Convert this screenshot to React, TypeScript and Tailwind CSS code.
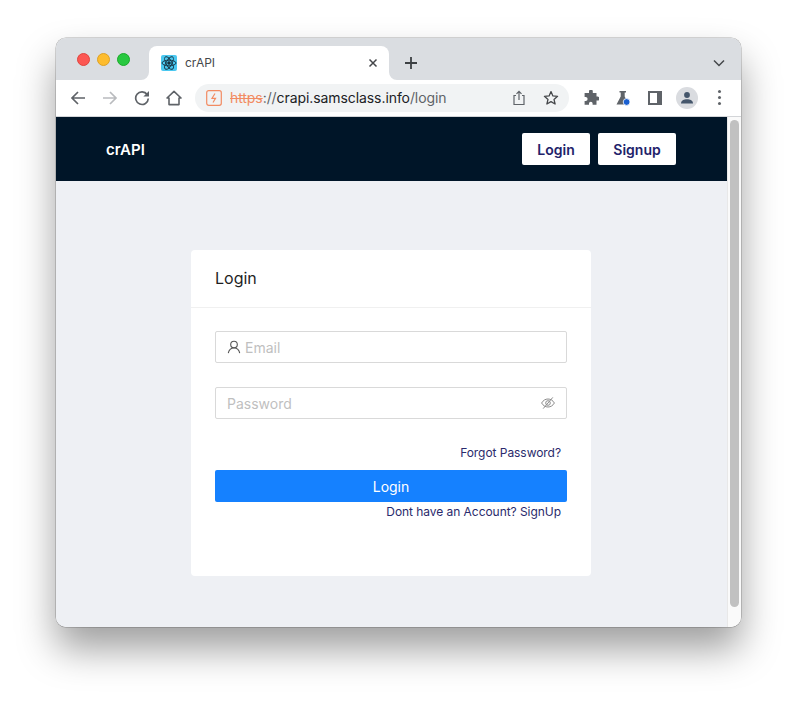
import React from "react";

const Dark = "#5f6368";

function Lights() {
  return (
    <div className="flex gap-[7px] ml-[21px] mr-[19px] mt-[15px] self-start">
      <div className="w-[13px] h-[13px] rounded-full bg-[#fc5753] border border-[#e0443e]" />
      <div className="w-[13px] h-[13px] rounded-full bg-[#fdbc2e] border border-[#dea123]" />
      <div className="w-[13px] h-[13px] rounded-full bg-[#28c840] border border-[#1aab29]" />
    </div>
  );
}

function ReactFavicon() {
  return (
    <div className="w-4 h-4 bg-[#4bc8f0] rounded-[2px] flex items-center justify-center shrink-0">
      <svg width="16" height="16" viewBox="0 0 16 16" fill="none" stroke="#16303f" strokeWidth="0.9">
        <ellipse cx="8" cy="8" rx="7" ry="2.8" />
        <ellipse cx="8" cy="8" rx="7" ry="2.8" transform="rotate(60 8 8)" />
        <ellipse cx="8" cy="8" rx="7" ry="2.8" transform="rotate(120 8 8)" />
        <circle cx="8" cy="8" r="1.3" fill="#16303f" />
      </svg>
    </div>
  );
}

function Tab() {
  return (
    <div className="relative w-[240px] h-[34px] mt-2 bg-white rounded-t-[8px] flex items-center pl-3 pr-[11px]">
      <svg className="absolute left-[-8px] bottom-0" width="8" height="8" viewBox="0 0 8 8">
        <path d="M8 0 V8 H0 A8 8 0 0 0 8 0 Z" fill="#fff" />
      </svg>
      <svg className="absolute right-[-8px] bottom-0" width="8" height="8" viewBox="0 0 8 8">
        <path d="M0 0 V8 H8 A8 8 0 0 1 0 0 Z" fill="#fff" />
      </svg>
      <ReactFavicon />
      <span className="ml-2 text-[12px] text-[#45474a] font-['Inter',sans-serif]">crAPI</span>
      <svg className="ml-auto" width="10" height="10" viewBox="0 0 10 10" stroke="#45474a" strokeWidth="1.5">
        <path d="M1.5 1.5 L8.5 8.5 M8.5 1.5 L1.5 8.5" />
      </svg>
    </div>
  );
}

function TabStrip() {
  return (
    <div className="h-[42px] bg-[#dadde1] flex items-start shrink-0">
      <Lights />
      <Tab />
      <svg className="ml-[15px] mt-[18px]" width="14" height="14" viewBox="0 0 14 14" stroke="#3c4043" strokeWidth="1.8">
        <path d="M7 1 V13 M1 7 H13" />
      </svg>
      <svg className="ml-auto mr-[16px] mt-[21px]" width="12" height="8" viewBox="0 0 12 8" fill="none" stroke="#45474a" strokeWidth="1.5">
        <path d="M1 1.5 L6 6.5 L11 1.5" />
      </svg>
    </div>
  );
}

function NavIcons() {
  return (
    <div className="flex items-center ml-2 gap-[4px]">
      <div className="w-7 h-7 flex items-center justify-center">
        <svg width="16" height="16" viewBox="0 0 16 16" fill="none" stroke={Dark} strokeWidth="1.7">
          <path d="M15 8 H2 M8 2 L2 8 L8 14" />
        </svg>
      </div>
      <div className="w-7 h-7 flex items-center justify-center">
        <svg width="16" height="16" viewBox="0 0 16 16" fill="none" stroke="#b9bbbe" strokeWidth="1.7">
          <path d="M1 8 H14 M8 2 L14 8 L8 14" />
        </svg>
      </div>
      <div className="w-7 h-7 flex items-center justify-center">
        <svg width="16" height="16" viewBox="0 0 16 16" fill="none" stroke={Dark} strokeWidth="1.7">
          <path d="M13.2 4.6 A6.3 6.3 0 1 0 14.3 8.5" />
          <path d="M15 1 V6.6 H9.4 Z" fill={Dark} stroke="none" />
        </svg>
      </div>
      <div className="w-7 h-7 flex items-center justify-center">
        <svg width="16" height="16" viewBox="0 0 16 16" fill="none" stroke={Dark} strokeWidth="1.6">
          <path d="M8 1.4 L15 8 H13 V14.6 H3 V8 H1 Z" strokeLinejoin="round" />
        </svg>
      </div>
    </div>
  );
}

function Omnibox() {
  return (
    <div className="ml-[7px] w-[374px] h-[28px] rounded-full bg-[#f1f3f4] flex items-center pl-[11px] pr-[10px]">
      <svg width="16" height="16" viewBox="0 0 16 16" fill="none" stroke="#f28b62" strokeWidth="1.2" className="shrink-0">
        <rect x="0.7" y="0.7" width="14.6" height="14.6" rx="2" />
        <path d="M9 3.5 L6 8.3 H9.5 L7 12.5" />
      </svg>
      <span className="ml-2 text-[14px] tracking-[-0.08px] text-[#5f6368] font-['Inter',sans-serif] whitespace-nowrap">
        <span className="text-[#f28b62] line-through">https</span>
        ://<span className="text-[#202124]">crapi.samsclass.info</span>/login
      </span>
      <svg className="ml-auto" width="14" height="16" viewBox="0 0 14 16" fill="none" stroke={Dark} strokeWidth="1.2">
        <path d="M4 5.5 H2 V14.5 H12 V5.5 H10 M7 10 V1.5 M4.5 3.8 L7 1.3 L9.5 3.8" />
      </svg>
      <svg className="ml-[17px]" width="16" height="16" viewBox="0 0 16 16" fill="none" stroke="#45474a" strokeWidth="1.3">
        <path d="M8 1.6 L9.9 5.9 L14.6 6.3 L11 9.4 L12.1 14 L8 11.6 L3.9 14 L5 9.4 L1.4 6.3 L6.1 5.9 Z" strokeLinejoin="round" />
      </svg>
    </div>
  );
}

function ToolIcons() {
  return (
    <div className="flex items-center ml-[6px]">
      <div className="w-8 h-7 flex items-center justify-center">
        <svg width="16" height="16" viewBox="0 0 16 16" fill={Dark}>
          <path d="M6 1.5 a1.9 1.9 0 0 1 3.8 0 V3 H13.5 V6.6 H14.6 a2 2 0 0 1 0 4 H13.5 V14.8 H9.6 V13.6 a1.8 1.8 0 0 0 -3.6 0 V14.8 H1.6 V11 H2.6 a2 2 0 0 0 0 -4 H1.6 V3 H6 Z" />
        </svg>
      </div>
      <div className="w-8 h-7 flex items-center justify-center">
        <svg width="16" height="16" viewBox="0 0 16 16">
          <path d="M4.5 1 H11 V2.5 H9.7 V6.5 L13.5 14.5 H1.5 L5.7 6.5 V2.5 H4.5 Z" fill={Dark} />
          <circle cx="11.6" cy="12" r="3.4" fill="#1a5fd0" stroke="#fff" strokeWidth="0.8" />
        </svg>
      </div>
      <div className="w-8 h-7 flex items-center justify-center">
        <div className="w-[14px] h-[14px] border-[2px] border-[#5f6368] border-r-[5px] bg-white" />
      </div>
      <div className="w-8 h-7 flex items-center justify-center">
        <div className="w-[22px] h-[22px] rounded-full bg-[#dadce0] flex items-center justify-center">
          <svg width="14" height="14" viewBox="0 0 14 14" fill="#45566b">
            <circle cx="7" cy="4" r="2.9" />
            <path d="M1 12.5 C1 9.5 4 8.2 7 8.2 C10 8.2 13 9.5 13 12.5 Z" />
          </svg>
        </div>
      </div>
      <div className="w-8 h-7 flex items-center justify-center">
        <div className="flex flex-col gap-[3px]">
          <div className="w-[3px] h-[3px] rounded-full bg-[#5f6368]" />
          <div className="w-[3px] h-[3px] rounded-full bg-[#5f6368]" />
          <div className="w-[3px] h-[3px] rounded-full bg-[#5f6368]" />
        </div>
      </div>
    </div>
  );
}

function Toolbar() {
  return (
    <div className="h-[37px] bg-white border-b border-[#d3d5d8] flex items-center pb-[1px] shrink-0">
      <NavIcons />
      <Omnibox />
      <ToolIcons />
    </div>
  );
}

function AppHeader() {
  return (
    <div className="h-[64px] bg-[#001528] flex items-center pl-[50px] pr-[51px] shrink-0">
      <span className="text-white text-[15px] font-semibold mt-[2px]">crAPI</span>
      <button className="ml-auto w-[68px] h-[32px] bg-white rounded-[2px] text-[14px] font-semibold text-[#22226a]">Login</button>
      <button className="ml-2 w-[78px] h-[32px] bg-white rounded-[2px] text-[14px] font-semibold text-[#22226a]">Signup</button>
    </div>
  );
}

function LoginCard() {
  return (
    <div className="mt-[69px] ml-[135px] w-[400px] h-[326px] bg-white rounded-[4px]">
      <div className="h-[58px] border-b border-[#f0f0f0] flex items-center px-6 pb-[1px]">
        <span className="text-[16px] font-normal text-[#1f1f1f]">Login</span>
      </div>
      <div className="px-6 pt-[23px]">
        <div className="h-[32px] border border-[#d9d9d9] rounded-[2px] flex items-center pl-[11px]">
          <svg width="14" height="14" viewBox="0 0 14 14" fill="none" stroke="#555" strokeWidth="1.1">
            <circle cx="7" cy="4.5" r="3.3" />
            <path d="M1.3 13.2 C1.8 10 4 8 7 8 C10 8 12.2 10 12.7 13.2" />
          </svg>
          <span className="ml-1 text-[14px] text-[#bfbfbf]">Email</span>
        </div>
        <div className="mt-6 h-[32px] border border-[#d9d9d9] rounded-[2px] flex items-center pl-[11px] pr-[11px]">
          <span className="text-[14px] text-[#bfbfbf]">Password</span>
          <svg className="ml-auto" width="14" height="14" viewBox="0 0 14 14" fill="none" stroke="#8c8c8c" strokeWidth="1">
            <path d="M0.6 7 C2.2 4.3 4.4 3 7 3 C9.6 3 11.8 4.3 13.4 7 C11.8 9.7 9.6 11 7 11 C4.4 11 2.2 9.7 0.6 7 Z" />
            <circle cx="7" cy="7" r="2.3" />
            <path d="M2.2 12.6 L11.8 1.4" />
          </svg>
        </div>
        <div className="mt-[26px] flex justify-end pr-[6px] h-[16px] items-center">
          <span className="text-[12px] tracking-[-0.05px] text-[#2a2a6c]">Forgot Password?</span>
        </div>
        <button className="mt-[9px] w-full h-[32px] bg-[#1581ff] rounded-[2px] text-[14px] text-white">Login</button>
        <div className="mt-[2px] flex justify-end pr-[6px] h-[16px] items-center">
          <span className="text-[12px] tracking-[-0.05px] text-[#2a2a6c]">Dont have an Account? SignUp</span>
        </div>
      </div>
    </div>
  );
}

function Scrollbar() {
  return (
    <div className="w-[14px] shrink-0 bg-[#fafafa] border-l border-[#e8e8e8] pt-[3px] pl-[2px]">
      <div className="w-[9px] h-[487px] rounded-full bg-[#c1c1c1]" />
    </div>
  );
}

export default function App() {
  return (
    <div className="w-[797px] h-[701px] bg-white overflow-hidden pt-[38px] pl-[56px] font-['Inter',sans-serif]">
      <div className="w-[685px] h-[589px] rounded-[10px] overflow-hidden flex flex-col shadow-[0_0_0_0.5px_rgba(0,0,0,0.3),0_22px_38px_rgba(0,0,0,0.38)]">
        <TabStrip />
        <Toolbar />
        <div className="flex-1 flex min-h-0">
          <div className="flex-1 bg-[#eef0f4] min-w-0">
            <AppHeader />
            <LoginCard />
          </div>
          <Scrollbar />
        </div>
      </div>
    </div>
  );
}
